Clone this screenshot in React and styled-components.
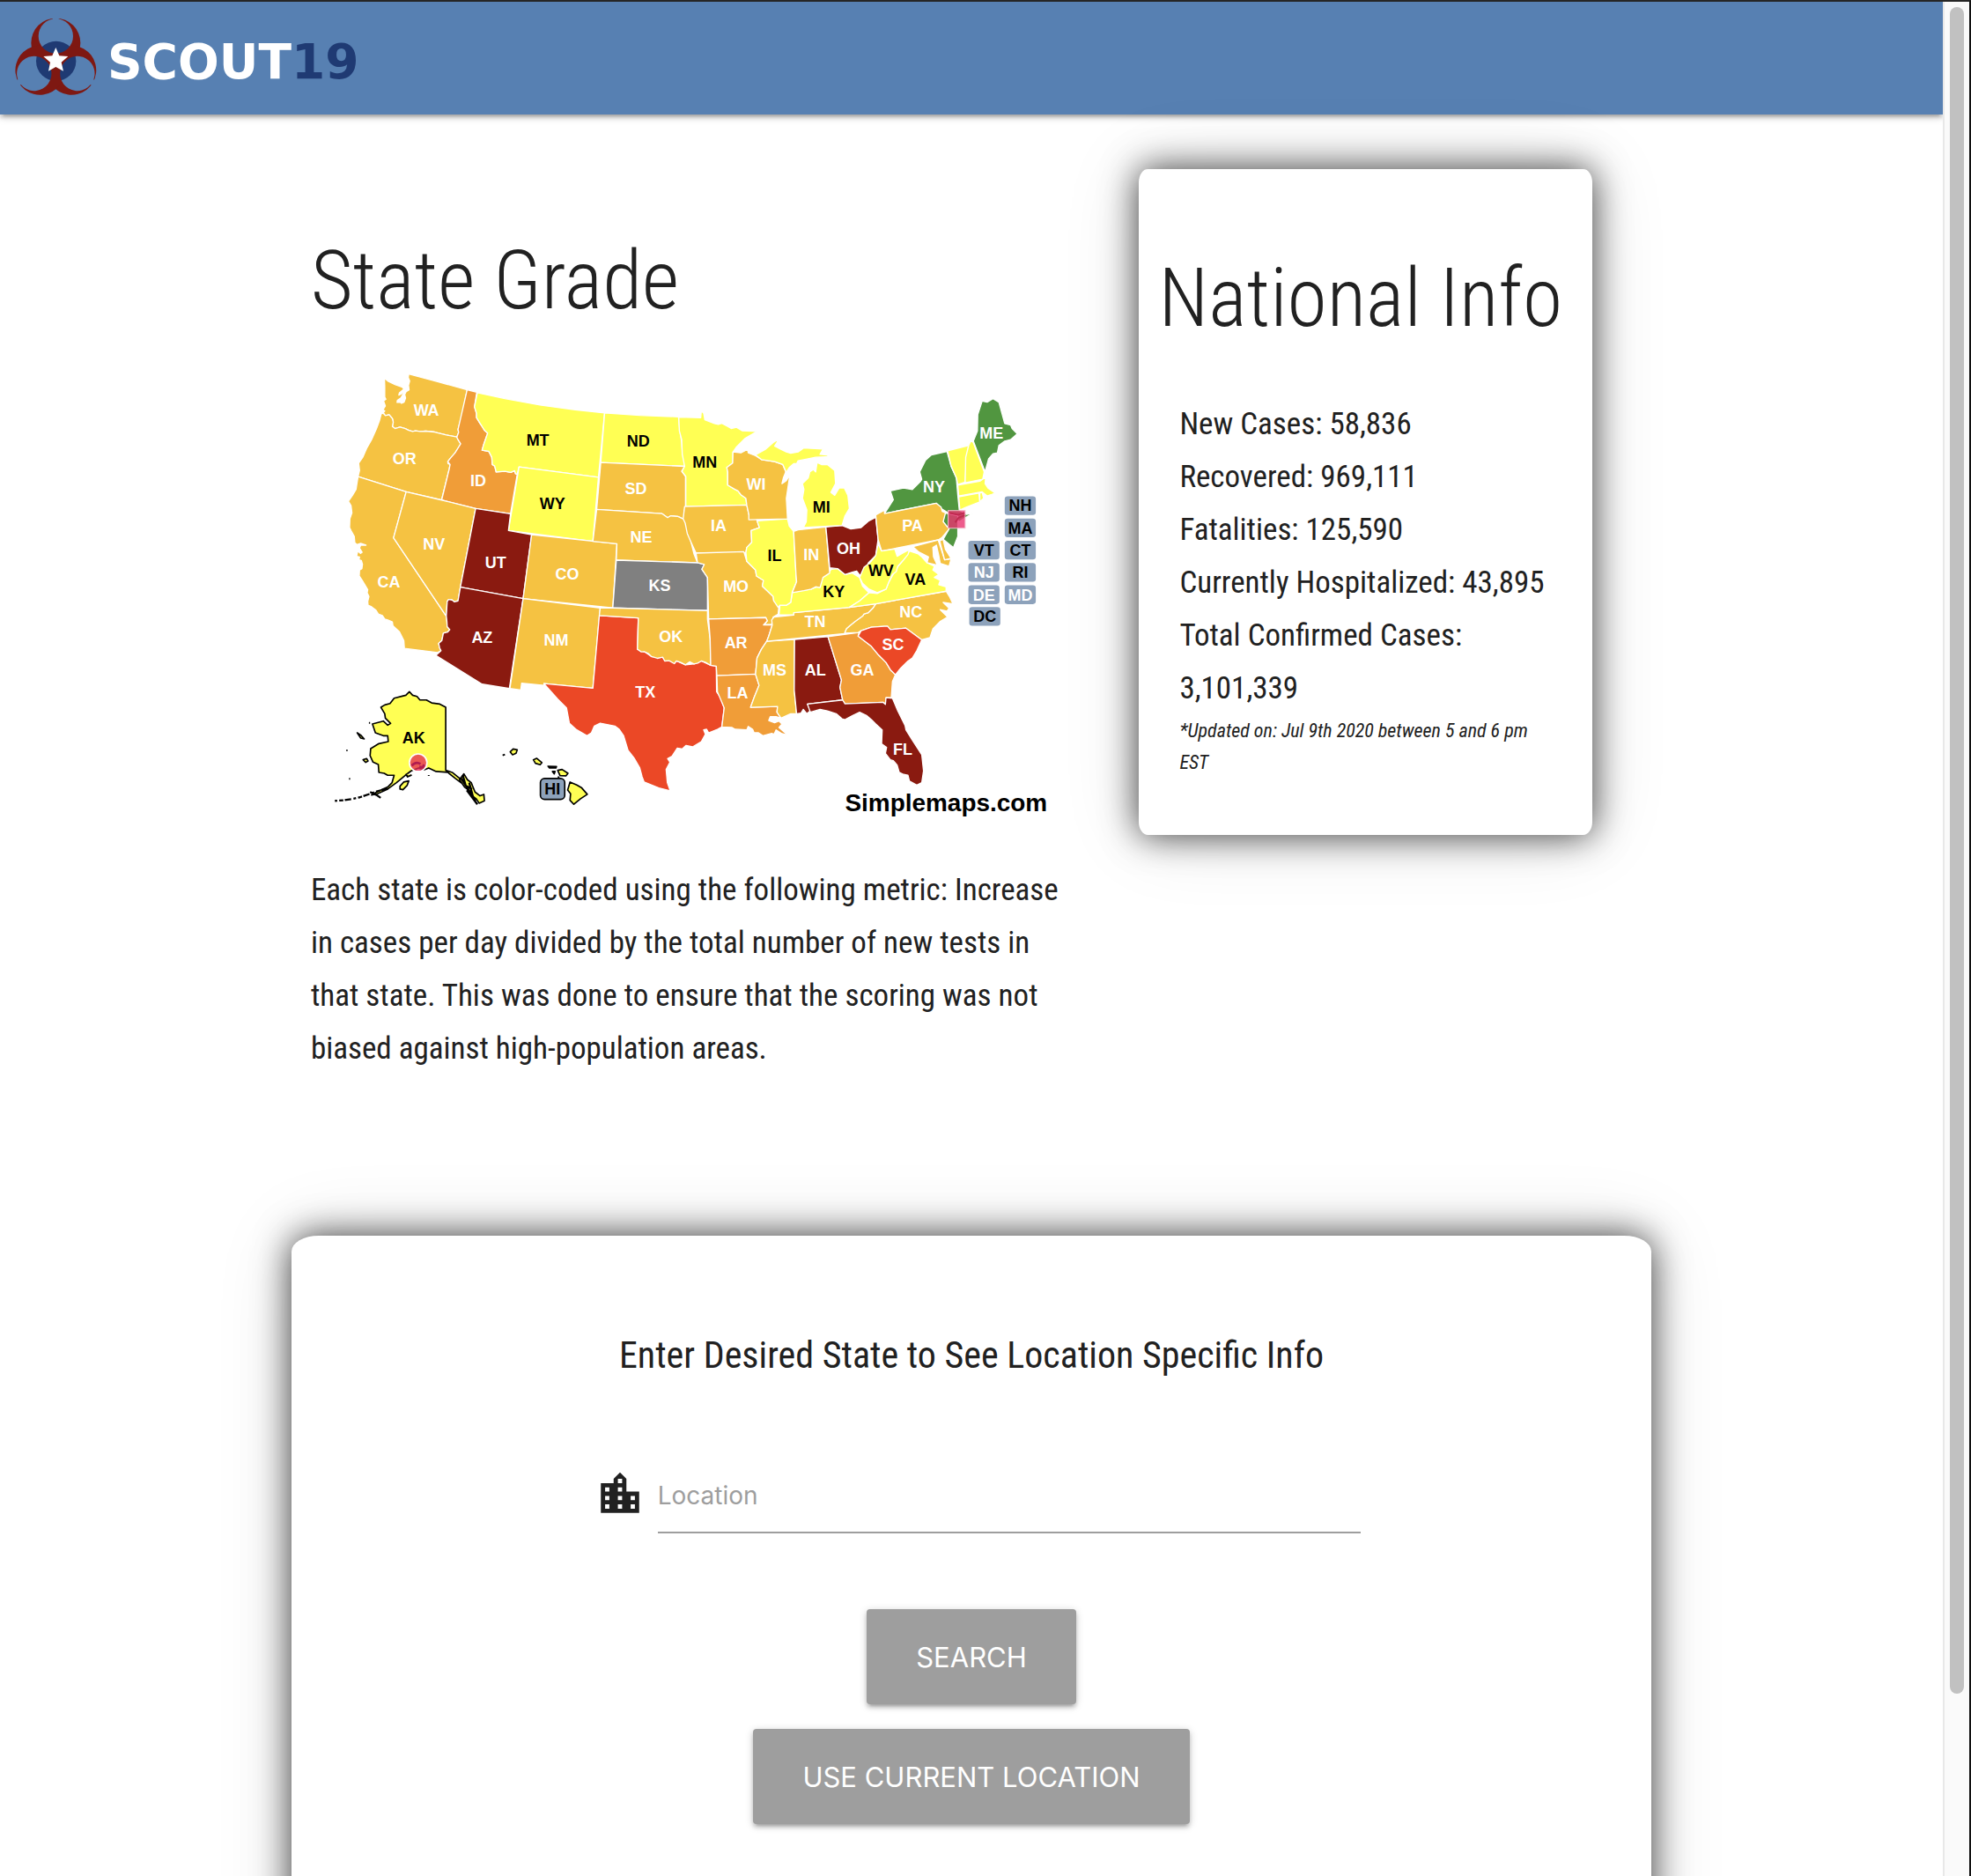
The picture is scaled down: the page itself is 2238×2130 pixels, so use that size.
import React from 'react';
import styled, { createGlobalStyle } from 'styled-components';
import { MdLocationCity } from 'react-icons/md';

const GlobalStyle = createGlobalStyle`
  * { box-sizing: border-box; }
  html, body { margin: 0; background: #fff; }
`;

const condensed = `"Roboto Condensed", Roboto, "Liberation Sans", sans-serif`;
const condensedLight = `"Roboto Condensed Light", "Roboto Condensed", Roboto, sans-serif`;
const ui = `Inter, "Liberation Sans", sans-serif`;

const Window = styled.div`
  display: grid;
  grid-template-columns: minmax(0, 1fr) 30px;
  height: 100vh;
  overflow: hidden;
  border-top: 2px solid #262626;
  border-right: 2px solid #111;
  color: #212121;
  font-family: ${condensed};
  font-size: 35px;
  line-height: 60px;
`;

const Page = styled.div`
  overflow: hidden;
`;

const ScrollTrack = styled.div`
  padding: 6px;
  background: #fafafa;
  border-left: 2px solid #e8e8e8;
`;

const ScrollThumb = styled.div`
  width: 16px;
  height: 90.5%;
  border-radius: 8px;
  background: #c1c1c1;
`;

const NavBar = styled.header`
  display: flex;
  align-items: center;
  height: 128px;
  padding: 0 16px;
  background: #5780b2;
  box-shadow: 0 4px 4px rgba(0, 0, 0, 0.14), 0 6px 2px -4px rgba(0, 0, 0, 0.12), 0 2px 10px rgba(0, 0, 0, 0.2);
`;

const Brand = styled.a`
  display: flex;
  align-items: flex-end;
  gap: 10px;
  color: #fff;
  font: bold 55px/88px "DejaVu Sans", sans-serif;
  text-decoration: none;
`;

const BrandNumber = styled.span`
  color: #1f3a73;
`;

const Container = styled.main`
  width: 70%;
  margin: 62px auto 0;
`;

const Overview = styled.div`
  display: flex;
  align-items: flex-start;
  gap: 4%;
`;

const GradeColumn = styled.section`
  width: 58.33%;
  padding: 72px 22px 0;
`;

const Title = styled.h1`
  margin: 0;
  font-family: ${condensedLight};
  font-size: 92px;
  line-height: 110px;
  font-weight: 300;
  white-space: nowrap;
`;

const MapDrawing = styled.svg`
  display: block;
  width: 100%;
  margin: 26px 0 32px;
`;

const Paragraph = styled.p`
  margin: 0;
`;

const Card = styled.section`
  border-radius: 2%;
  background: #fff;
  box-shadow: 0 0 40px rgba(0, 0, 0, 0.75), 0 0 90px rgba(0, 0, 0, 0.12);
`;

const InfoCard = styled(Card)`
  width: 33.33%;
  padding: 92px 22px 64px;
`;

const Facts = styled.ul`
  margin: 58px 0 0;
  padding: 0 24px;
  list-style: none;
`;

const Updated = styled.p`
  margin: 0;
  padding: 0 24px;
  font-size: 22px;
  font-style: italic;
  line-height: 36px;
`;

const SearchCard = styled(Card)`
  display: flex;
  flex-direction: column;
  align-items: center;
  margin-top: 182px;
  padding: 106px 0 230px;
`;

const SearchTitle = styled.h2`
  margin: 0;
  font-size: 42px;
  font-weight: 400;
  line-height: 60px;
`;

const SearchForm = styled.form`
  display: flex;
  flex-direction: column;
  align-items: center;
  gap: 28px;
  width: 58.33%;
  margin-top: 88px;
`;

const Field = styled.label`
  display: flex;
  align-items: center;
  gap: 14px;
  width: 100%;
  margin-bottom: 58px;
  padding: 0 8px 0 22px;
`;

const FieldIcon = styled(MdLocationCity)`
  width: 58px;
  height: 58px;
  margin-bottom: 6px;
`;

const FieldInput = styled.input`
  flex: 1;
  height: 84px;
  padding: 0;
  border: 0;
  border-bottom: 2px solid #9e9e9e;
  outline: 0;
  background: transparent;
  color: #212121;
  font: 400 28px ${ui};
  &::placeholder { color: #9e9e9e; opacity: 1; }
`;

const Button = styled.button`
  height: 108px;
  padding: 0 56px;
  border: 0;
  border-radius: 4px;
  background: #9e9e9e;
  box-shadow: 0 4px 4px rgba(0, 0, 0, 0.14), 0 6px 2px -4px rgba(0, 0, 0, 0.12), 0 2px 10px rgba(0, 0, 0, 0.2);
  color: #fff;
  font: 400 31px ${ui};
  text-transform: uppercase;
`;

const MapLabel = styled.text`
  fill: ${(p) => (p.$dark ? '#000' : '#fff')};
  font: bold 54px "Liberation Sans", Arial, sans-serif;
  text-anchor: middle;
`;

const MapCredit = styled.text`
  font: bold 84px "Liberation Sans", Arial, sans-serif;
`;

const GOLD = '#f5c242';
const ORANGE = '#f09d38';
const YELLOW = '#ffff54';
const MAROON = '#8a1a10';
const RED = '#eb4826';
const GREEN = '#519640';
const GREY = '#808080';
const BADGE = '#8da2bb';

const west = [
  [GOLD, '372,76 470,102 571,130 554,215 540,265 542,275 536,291 500,284 460,274 430,271 410,272 395,270 385,272 372,268 360,262 342,257 325,262 316,255 319,240 316,228 305,215 292,218 285,208 290,202 284,198 292,185 286,168 294,162 290,155 290,120 289,90 300,100 325,112 350,121 355,128 350,132 340,140 338,148 347,144 350,138 354,142 345,158 333,166 332,173 343,172 347,176 356,172 361,158 358,146 363,136 373,130 371,115 375,100 370,88'],
  [GOLD, '285,210 292,218 305,215 316,228 319,240 316,255 325,262 342,257 360,262 372,268 385,272 395,270 410,272 430,271 460,274 500,284 536,291 540,300 549,314 545,322 530,345 515,362 505,375 506,382 513,385 510,400 484,506 363,478 199,426 204,405 201,380 215,360 228,330 245,300 262,262 272,235 278,212'],
  [ORANGE, '571,130 604,138 596,188 603,210 603,225 615,245 625,258 630,268 641,278 635,295 628,315 622,336 645,340 655,360 657,385 665,390 670,410 700,408 720,412 733,406 736,416 742,418 719,553 600,535 484,506 510,400 513,385 505,375 515,362 530,345 549,314 540,300 536,291 542,275 540,265'],
  [YELLOW, '606,140 700,160 820,182 940,198 1040,209 1019,428 748,393 742,418 736,416 733,406 720,412 700,408 670,410 665,390 657,385 655,360 645,340 622,336 628,315 641,278 630,268 603,225 603,210 596,188'],
  [YELLOW, '748,393 1019,428 1000,647 712,610'],
  [GOLD, '199,426 363,478 320,635 500,902 502,920 503,938 512,948 505,956 490,960 485,985 474,995 477,1010 482,1020 470,1026 357,1012 355,985 340,955 318,935 316,922 300,915 290,912 282,900 268,895 260,882 245,870 233,865 232,852 236,835 230,822 232,812 225,800 212,778 203,765 204,745 212,740 214,725 210,712 202,710 204,700 194,698 198,680 207,688 213,684 204,670 208,660 226,660 208,654 195,658 188,652 186,630 176,612 170,600 171,570 178,550 175,525 166,510 180,490 192,470 195,450'],
  [GOLD, '363,478 484,506 600,535 548,803 540,850 527,853 520,847 508,845 503,852 500,902 320,635'],
  [MAROON, '600,535 719,553 712,610 791,624 762,842 548,803'],
  [GOLD, '791,624 1082,655 1068,874 762,842'],
  [MAROON, '548,803 762,842 715,1149 622,1134 464,1036 482,1020 477,1010 474,995 485,985 490,960 505,956 512,948 503,938 502,920 500,902 503,852 508,845 520,847 527,853 540,850'],
  [GOLD, '762,842 1025,874 1000,1148 833,1132 833,1138 757,1131 754,1154 717,1149'],
  [YELLOW, '1040,209 1160,217 1292,222 1297,270 1303,310 1306,350 1313,370 1313,391 1027,378'],
  [GOLD, '1027,378 1313,391 1303,408 1316,425 1316,528 1311,545 1311,572 1290,562 1265,560 1255,566 1235,552 1013,538'],
  [GOLD, '1013,538 1235,552 1255,566 1265,560 1290,562 1311,572 1325,600 1335,650 1345,690 1357,720 1080,711 1082,655 1000,647'],
  [GREY, '1080,711 1357,720 1380,726 1372,742 1391,770 1391,883 1068,874'],
  [RED, '1022,900 1155,908 1152,1015 1175,1023 1200,1040 1238,1042 1245,1052 1285,1055 1316,1068 1345,1065 1370,1055 1402,1070 1421,1073 1422,1160 1436,1180 1448,1215 1440,1280 1425,1288 1395,1300 1388,1288 1378,1290 1384,1305 1370,1330 1340,1348 1318,1343 1305,1355 1288,1352 1270,1380 1255,1388 1263,1400 1250,1425 1254,1470 1264,1498 1225,1488 1175,1468 1168,1450 1160,1420 1140,1385 1120,1360 1105,1310 1090,1288 1075,1277 1025,1267 1005,1277 995,1300 980,1310 945,1290 920,1268 910,1215 880,1185 833,1132 1000,1148'],
  [GOLD, '1025,874 1068,874 1391,883 1391,912 1400,980 1402,1070 1385,1060 1370,1055 1358,1062 1345,1065 1330,1058 1316,1068 1300,1060 1285,1055 1278,1064 1260,1054 1245,1055 1238,1042 1220,1046 1200,1040 1190,1030 1175,1023 1165,1024 1152,1015 1155,908 1022,900'],
];

const east = [
  [YELLOW, '33,103 108,105 110,82 118,90 122,112 155,125 168,128 180,124 200,135 212,142 230,138 250,150 300,152 260,175 230,205 218,222 217,260 197,275 200,290 200,335 222,348 235,355 245,368 262,380 265,403 57,408 57,305 44,288 53,271 45,230 43,180 35,150'],
  [GOLD, '53,408 265,403 272,435 290,442 300,455 308,480 280,490 282,530 265,548 262,565 92,567 75,530 62,500 55,465 48,450'],
  [GOLD, '92,567 255,562 265,595 295,625 298,645 322,660 318,680 355,715 357,730 375,745 372,775 355,785 350,810 325,812 335,798 330,787 135,792 131,650 112,622 120,606 97,600'],
  [ORANGE, '135,792 330,787 335,798 322,812 352,812 340,850 333,868 315,895 300,925 295,980 163,985 161,953 142,950 140,860'],
  [ORANGE, '163,985 295,980 307,1018 290,1060 278,1093 370,1090 368,1110 382,1130 365,1125 345,1125 340,1138 360,1146 375,1140 385,1150 375,1162 405,1188 385,1183 365,1170 358,1185 350,1182 320,1190 305,1180 290,1180 285,1168 270,1158 265,1170 225,1168 215,1162 180,1160 188,1095 165,1040'],
  [GOLD, '333,868 428,862 427,1035 435,1115 415,1115 400,1122 382,1130 368,1110 370,1090 278,1093 290,1060 307,1018 295,980 300,925 315,895'],
  [MAROON, '428,862 542,852 588,1000 583,1025 592,1068 472,1082 482,1105 470,1115 458,1100 450,1113 435,1115 427,1035'],
  [ORANGE, '542,852 648,838 645,850 690,885 715,915 740,940 755,965 772,982 762,1005 758,1060 740,1060 738,1082 730,1076 600,1081 592,1068 583,1025 588,1000'],
  [MAROON, '472,1082 592,1068 600,1081 730,1076 738,1083 740,1060 762,1062 780,1105 805,1155 808,1170 830,1205 862,1255 868,1310 862,1350 845,1358 820,1345 815,1325 800,1322 785,1315 778,1290 765,1275 755,1272 738,1250 742,1230 725,1218 727,1170 705,1150 690,1135 675,1122 650,1110 625,1122 600,1135 590,1132 570,1115 540,1105 515,1100 482,1110'],
  [GOLD, '705,740 945,697 958,718 968,740 935,735 955,755 948,765 925,760 950,785 925,800 900,825 890,855 862,863 808,823 755,828 745,816 690,820 655,832 645,838 598,840 605,825 620,812 635,800 660,782 665,775 680,770 695,755'],
  [RED, '645,850 655,832 690,820 745,816 755,828 808,823 862,863 845,900 830,925 815,935 790,960 772,982 755,965 740,940 715,915 690,885'],
  [GOLD, '425,770 615,752 705,740 695,755 680,770 665,775 660,782 635,800 620,812 605,825 598,842 333,868 340,850 352,812 350,795 358,785 425,778'],
  [YELLOW, '375,778 425,778 425,770 615,752 650,730 682,702 660,680 650,650 625,635 600,640 575,620 553,622 540,640 520,650 510,680 485,690 450,695 420,702 415,735 400,745 378,745'],
  [YELLOW, '300,457 404,450 410,475 425,493 433,640 435,665 420,700 415,735 400,745 378,745 372,752 357,730 355,715 318,680 322,660 298,645 295,625 265,595 262,565 265,548 282,530 280,490 308,480'],
  [GOLD, '425,493 440,488 535,478 548,635 525,650 515,685 500,682 485,690 460,695 420,702 435,665 433,640'],
  [MAROON, '535,478 590,473 620,485 655,480 680,458 705,445 713,520 705,575 680,600 675,615 665,620 660,640 650,642 640,628 625,632 600,640 575,620 548,617'],
  [YELLOW, '458,480 590,473 600,440 615,415 610,370 598,345 580,345 565,370 552,360 568,330 565,285 540,265 520,265 505,258 500,290 492,282 480,290 475,310 455,330 460,350 455,380 470,420 468,460'],
  [GOLD, '218,222 245,225 268,213 270,225 295,235 315,248 360,255 388,265 398,290 390,310 385,330 400,320 412,300 400,380 404,450 272,453 272,435 265,403 262,380 245,368 235,355 222,348 200,335 200,290 197,275 217,260'],
  [YELLOW, '295,232 330,212 355,190 375,178 360,202 380,212 400,222 415,226 440,222 460,208 485,210 525,212 515,230 535,232 550,238 500,240 475,245 440,252 435,262 425,262 410,275 400,292 388,265 360,255 315,248'],
  [GREEN, '735,432 765,385 755,355 775,350 800,345 830,350 858,322 862,315 855,290 875,250 895,232 948,220 962,270 980,310 985,370 990,420 1015,435 1038,430 1005,450 990,460 945,425 928,415 912,397'],
  [GREEN, '940,430 985,440 985,510 970,548 935,520 955,485 935,460'],
  [GOLD, '705,437 735,420 735,432 912,397 928,410 932,425 943,430 935,460 955,485 930,515 918,522 725,560 713,520'],
  [YELLOW, '615,752 650,730 682,702 710,705 740,690 750,665 775,620 800,590 820,560 850,570 862,580 880,600 905,612 900,625 920,640 905,650 925,660 920,675 945,682 945,697 705,740'],
  [YELLOW, '713,535 725,560 770,553 778,578 800,565 820,555 815,572 800,590 780,612 775,630 762,640 750,665 740,690 710,702 682,690 660,670 650,650 665,615 685,600 705,575'],
  [GOLD, '832,545 918,522 940,590 962,587 955,612 925,602 920,575 912,540 900,548 902,580 915,608 880,600 885,580 850,562'],
  [GOLD, '923,525 935,520 943,555 962,585 940,590'],
  [YELLOW, '950,218 1022,200 1015,240 1010,325 985,333 980,310 962,270'],
  [YELLOW, '1022,200 1030,183 1038,190 1075,290 1070,315 1010,327 1012,240'],
  [YELLOW, '985,335 1060,322 1080,308 1078,330 1088,345 1112,362 1098,368 1085,372 1068,358 988,372'],
  [YELLOW, '988,375 1057,362 1060,392 1010,412 992,420'],
  [YELLOW, '1060,362 1068,360 1073,380 1060,392'],
  [GREEN, '1038,185 1052,150 1053,95 1068,48 1085,52 1105,40 1125,52 1145,125 1165,130 1170,142 1188,160 1165,180 1145,185 1125,200 1120,225 1105,228 1090,245 1078,290'],
];

const alaska = [
  '374,380 385,392 400,396 410,408 432,408 450,418 478,422 498,433 498,648 520,655 545,675 550,690 530,675 505,655 465,652 440,640 425,646 405,640 380,650 360,665 330,690 300,712 265,728 245,732 270,718 300,705 315,690 322,665 300,665 288,658 270,655 268,628 250,620 240,598 242,574 270,557 302,550 300,530 285,530 258,520 248,490 285,480 300,494 310,488 292,470 290,455 277,433 290,425 308,420 322,402 350,395 362,392',
  '196,520 208,528 220,541 208,538',
  '216,612 228,608 233,616 225,621',
  '342,702 355,688 372,684 366,700 352,714 342,712',
  '545,680 560,660 572,680 585,690 598,722 615,735 628,730 630,752 612,760 602,745 588,735 575,715 562,705',
  '718,585 728,575 742,578 738,590 726,595',
  '797,612 808,607 826,622 820,629 804,624',
  '847,634 876,635 874,640 852,640',
  '880,648 895,645 915,658 908,667 888,666',
  '862,652 871,652 868,660',
  '922,688 945,698 962,708 981,730 958,745 935,764 922,750 924,728 914,715',
];

const labelsWest = [
  ['WA', 432, 218], ['OR', 357, 383], ['ID', 609, 458], ['MT', 812, 320, 1], ['WY', 862, 537, 1],
  ['ND', 1155, 323, 1], ['SD', 1147, 486], ['NE', 1165, 650], ['KS', 1228, 815], ['CO', 912, 776],
  ['NV', 458, 674], ['CA', 304, 803], ['UT', 668, 738], ['AZ', 622, 993], ['NM', 875, 1004],
  ['OK', 1266, 992], ['TX', 1179, 1181], ['AK', 389, 1335, 1],
];

const labelsEast = [
  ['MN', 122, 275, 1], ['WI', 297, 352], ['IA', 169, 491], ['MO', 228, 700], ['AR', 228, 892],
  ['LA', 234, 1062], ['MS', 360, 985], ['AL', 499, 985], ['GA', 659, 985], ['FL', 797, 1254],
  ['SC', 764, 898], ['NC', 825, 785], ['TN', 498, 820], ['KY', 562, 718, 1], ['VA', 840, 675, 1],
  ['WV', 723, 645, 1], ['OH', 612, 570], ['IN', 485, 592], ['IL', 360, 594, 1], ['MI', 520, 428, 1],
  ['PA', 830, 491], ['NY', 904, 359], ['ME', 1100, 176],
];

const badges = [
  ['NH', 1145, 373, 1], ['MA', 1145, 449, 1], ['VT', 1021, 525, 1], ['CT', 1145, 525, 1], ['NJ', 1021, 601],
  ['RI', 1145, 601, 1], ['DE', 1021, 677], ['MD', 1145, 677], ['DC', 1024, 751, 1],
];

const States = ({ list }) => list.map(([fill, points], i) => <polygon key={i} fill={fill} points={points} />);

const Labels = ({ list }) =>
  list.map(([name, x, y, dark]) => (
    <MapLabel key={name} x={x} y={y} $dark={dark}>{name}</MapLabel>
  ));

const UsaMap = () => (
  <MapDrawing viewBox="38 2 2574 1650" role="img" aria-label="State grade map">
    <g stroke="#fff" strokeWidth="4" strokeLinejoin="round">
      <States list={west} />
      <g transform="translate(1260 120)"><States list={east} /></g>
    </g>
    <g transform="translate(0 780)" fill={YELLOW} stroke="#000" strokeWidth="5" strokeLinejoin="round">
      {alaska.map((points) => <polygon key={points} points={points} />)}
      <path d="M300 710L262 720 240 728 205 740 178 746 150 750 120 752" fill="none" strokeWidth="7" strokeDasharray="22 5 14 7 9 8" />
      <path d="M240 722L262 732 276 742M548 672L600 752M556 664L566 700 588 712M570 716L606 764M578 690L592 742" fill="none" strokeWidth="7" />
      <path d="M159 580h4M168 677h4M236 486h4M692 597l8-3M440 664v3M880 672h6M362 660l6 10 14-6" strokeWidth="6" />
      <circle cx="404" cy="622" r="30" fill="#e62a55" fillOpacity="0.78" stroke="#fff" />
      <path d="M382 632q14-16 30-6M408 636l12 2 4-10" fill="none" stroke="#b01c50" strokeWidth="8" />
      <rect x="821" y="676" width="83" height="71" rx="14" fill={BADGE} />
    </g>
    <MapLabel x="862" y="1510" $dark>HI</MapLabel>
    <Labels list={labelsWest} />
    <g transform="translate(1260 120)">
      <rect x="952" y="422" width="58" height="60" fill="#e8336f" fillOpacity="0.8" stroke="#f4bccb" strokeWidth="3" />
      <path d="M956 430l30 6 22-6M976 462l12-16 20-8" fill="none" stroke="#c02a50" strokeWidth="6" />
      <Labels list={labelsEast} />
      {badges.map(([name, x, y, dark]) => (
        <g key={name}>
          <rect x={x} y={y} width="106" height="64" rx="10" fill={BADGE} />
          <MapLabel x={x + 53} y={y + 51} $dark={dark}>{name}</MapLabel>
        </g>
      ))}
      <MapCredit x="600" y="1447">Simplemaps.com</MapCredit>
    </g>
  </MapDrawing>
);

const turns = [0, 120, 240];

const LogoMark = () => (
  <svg width="96" height="96" viewBox="48 52 288 288" aria-hidden="true">
    <mask id="rings" maskUnits="userSpaceOnUse" x="0" y="0" width="400" height="400">
      <rect width="400" height="400" fill="#fff" />
      {turns.map((t) => (
        <g key={t} transform={`rotate(${t} 190 206)`}>
          <circle cx="190" cy="121" r="59" />
          <rect x="180" y="50" width="20" height="40" />
        </g>
      ))}
    </mask>
    <circle cx="191" cy="206" r="68" fill="#1f3a73" />
    <g fill="#7e1812" mask="url(#rings)">
      {turns.map((t) => (
        <circle key={t} cx="190" cy="144" r="84" transform={`rotate(${t} 190 206)`} />
      ))}
    </g>
    <path fill="#fff" d="M190 160L202 188 232 190 209 210 216 240 190 226 165 240 171 210 148 190 178 188Z" />
  </svg>
);

export default function App() {
  return (
    <Window>
      <GlobalStyle />
      <Page>
        <NavBar>
          <Brand href="#">
            <LogoMark />
            <span>SCOUT<BrandNumber>19</BrandNumber></span>
          </Brand>
        </NavBar>
        <Container>
          <Overview>
            <GradeColumn>
              <Title>State Grade</Title>
              <UsaMap />
              <Paragraph>
                Each state is color-coded using the following metric: Increase in cases per day divided by the
                total number of new tests in that state. This was done to ensure that the scoring was not biased
                against high-population areas.
              </Paragraph>
            </GradeColumn>
            <InfoCard>
              <Title>National Info</Title>
              <Facts>
                <li>New Cases: 58,836</li>
                <li>Recovered: 969,111</li>
                <li>Fatalities: 125,590</li>
                <li>Currently Hospitalized: 43,895</li>
                <li>Total Confirmed Cases: 3,101,339</li>
              </Facts>
              <Updated>*Updated on: Jul 9th 2020 between 5 and 6 pm EST</Updated>
            </InfoCard>
          </Overview>
          <SearchCard>
            <SearchTitle>Enter Desired State to See Location Specific Info</SearchTitle>
            <SearchForm onSubmit={(e) => e.preventDefault()}>
              <Field>
                <FieldIcon aria-hidden="true" />
                <FieldInput type="text" placeholder="Location" aria-label="Location" />
              </Field>
              <Button type="submit">Search</Button>
              <Button type="button">Use Current Location</Button>
            </SearchForm>
          </SearchCard>
        </Container>
      </Page>
      <ScrollTrack><ScrollThumb /></ScrollTrack>
    </Window>
  );
}
